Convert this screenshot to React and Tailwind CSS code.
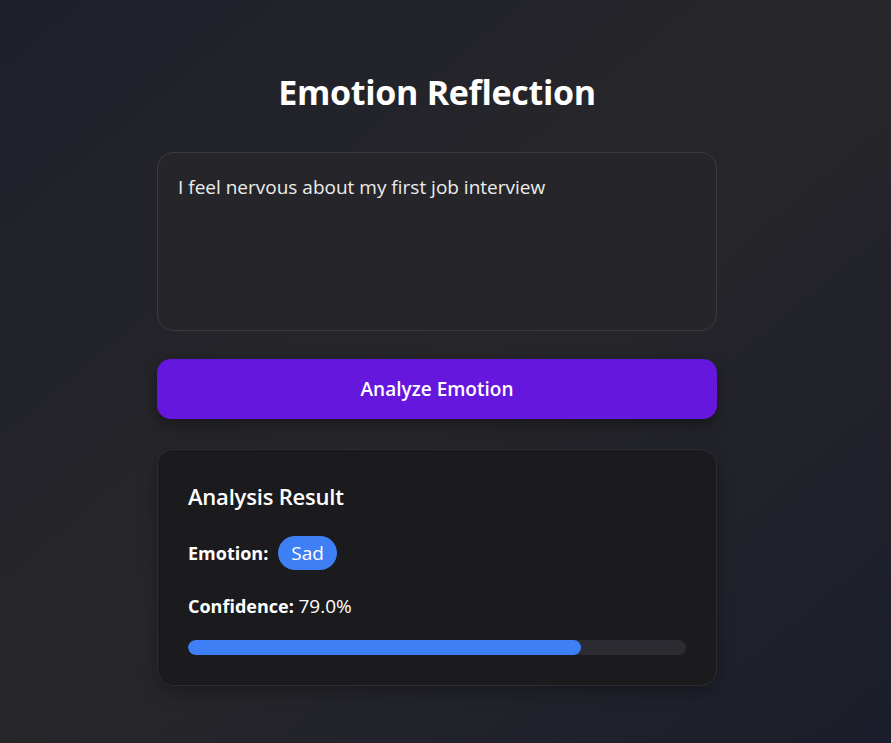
export default function App() {
  return (
    <div
      className="min-h-[743px] w-full bg-gradient-to-br from-[#1e1f2a] via-[#27272a] to-[#1b1d2a] text-white"
      style={{ fontFamily: '"Open Sans", "Noto Sans", sans-serif' }}
    >
      <div className="flex w-[874px] justify-center">
        <div className="flex w-[560px] flex-col pt-[72px] pb-[57px]">
          <h1 className="mb-10 text-center text-[34px] font-bold leading-[40px] tracking-[-0.3px] text-white">
            Emotion Reflection
          </h1>
          <textarea
            className="h-[179px] w-full resize-none rounded-2xl border border-[#3a3a40] bg-[#26262a] px-5 py-5 text-[19px] leading-[28px] text-[#ececec] outline-none"
            defaultValue="I feel nervous about my first job interview"
          />
          <button className="mt-7 h-[60px] w-full rounded-[14px] bg-[#6617dd] text-[19px] font-semibold text-white shadow-[0_6px_16px_rgba(0,0,0,0.35)]">
            Analyze Emotion
          </button>
          <div className="mt-[30px] flex flex-col rounded-2xl border border-[#2c2c31] bg-[#1b1b1e] p-[30px] shadow-[0_6px_16px_rgba(0,0,0,0.25)]">
            <h2 className="text-[22px] font-semibold leading-[32px] tracking-[-0.2px] text-white">Analysis Result</h2>
            <div className="mt-6 flex h-[34px] items-center gap-[10px]">
              <span className="text-[18px] font-bold leading-[28px]">Emotion:</span>
              <span className="rounded-full bg-[#3f7ff6] px-[13px] text-[19px] leading-[34px] text-white">Sad</span>
            </div>
            <p className="mt-[22px] text-[18px] leading-[28px]">
              <span className="font-bold">Confidence:</span> <span className="text-[19px]">79.0%</span>
            </p>
            <div className="mt-5 h-[15px] w-full overflow-hidden rounded-full bg-[#2c2b31]">
              <div className="h-full rounded-full bg-[#3f7ff6]" style={{ width: "79%" }} />
            </div>
          </div>
        </div>
      </div>
    </div>
  );
}
